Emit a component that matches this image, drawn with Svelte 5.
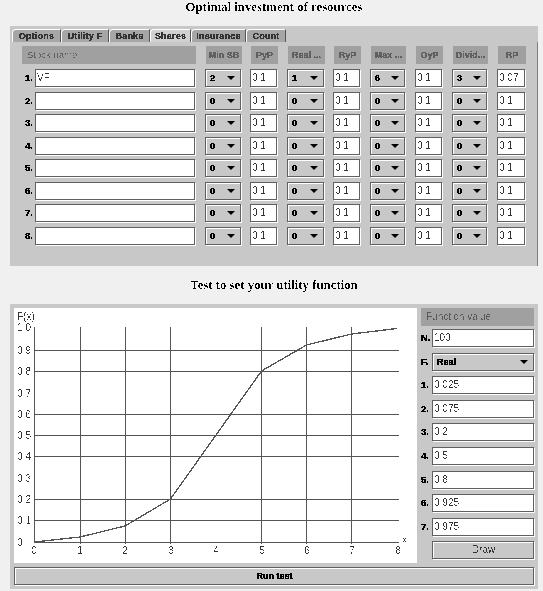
<script>
  const tabs = ['Options', 'Utility F', 'Banks', 'Shares', 'Insurance', 'Count'];
  const tabWidths = [49, 48, 41, 41, 55, 40];
  const cols = [
    { label: 'Min SB', w: 36, gap: 10, sel: true },
    { label: 'PyP', w: 27, gap: 9 },
    { label: 'Real ...', w: 37, gap: 10, sel: true },
    { label: 'RyP', w: 27, gap: 9 },
    { label: 'Max ...', w: 35, gap: 10, sel: true },
    { label: 'OyP', w: 27, gap: 10 },
    { label: 'Divid...', w: 35, gap: 10, sel: true },
    { label: 'RP', w: 28, gap: 10 }
  ];
  const rows = [
    { name: 'VF', vals: ['2', '0.1', '1', '0.1', '6', '0.1', '3', '0.07'] },
    ...[2, 3, 4, 5, 6, 7, 8].map(() => ({ name: '', vals: ['0', '0.1', '0', '0.1', '0', '0.1', '0', '0.1'] }))
  ];
  const fnValues = ['0.025', '0.075', '0.2', '0.5', '0.8', '0.925', '0.975'];

  const vLines = [66, 111, 156.5, 247.5, 292.5, 337.5];
  const hLines = [42.5, 63.5, 106.5, 127.5, 148.5, 191.5, 212.5];
  const yLabels = [
    ['1.0', 19], ['0.9', 42], ['0.8', 63], ['0.7', 85], ['0.6', 106], ['0.5', 127],
    ['0.4', 148], ['0.3', 170], ['0.2', 191], ['0.1', 212], ['0', 234]
  ];
  const xLabels = [20, 66, 111, 157, 202, 248, 293, 338, 384];
  const curve = '20.5,234 66,229 111,218 156.5,191 247.5,63 292.5,37 337.5,26 383,20.5';
</script>

<svg class="defs" width="0" height="0" aria-hidden="true">
  <filter id="alias" x="0" y="0" width="100%" height="100%" color-interpolation-filters="sRGB">
    <feComponentTransfer>
      <feFuncA type="discrete" tableValues="0 0 0 1 1" />
    </feComponentTransfer>
  </filter>
  <filter id="aliasb" x="0" y="0" width="100%" height="100%" color-interpolation-filters="sRGB">
    <feComponentTransfer>
      <feFuncA type="discrete" tableValues="0 1 1 1" />
    </feComponentTransfer>
  </filter>
</svg>

<div class="page">
  <h1 class="title"><span class="tx">Optimal investment of resources</span></h1>

  <section class="panel top">
    <div class="tabs">
      {#each tabs as t, i}
        <div class="tab" class:active={t === 'Shares'} style="width:{tabWidths[i]}px"><span class="tx">{t}</span></div>
      {/each}
    </div>
    <div class="pane">
      <div class="row head">
        <div class="hcell name-h"><span class="tx">Stock name</span></div>
        {#each cols as c}
          <div class="hcell" style="width:{c.w}px;margin-left:{c.gap}px"><span class="tx">{c.label}</span></div>
        {/each}
      </div>
      <div class="rows">
        {#each rows as r, i}
          <div class="row">
            <div class="num"><span class="tx">{i + 1}.</span></div>
            <div class="field name"><span class="tx">{r.name}</span></div>
            {#each cols as c, j}
              {#if c.sel}
                <div class="combo" style="width:{c.w}px;margin-left:{c.gap}px"><span class="tx">{r.vals[j]}</span><i class="arrow"></i></div>
              {:else}
                <div class="field" style="width:{c.w}px;margin-left:{c.gap}px"><span class="tx">{r.vals[j]}</span></div>
              {/if}
            {/each}
          </div>
        {/each}
      </div>
    </div>
  </section>

  <h2 class="title second"><span class="tx">Test to set your utility function</span></h2>

  <section class="panel bottom">
    <div class="work">
      <div class="chart">
        <svg width="403" height="255" viewBox="0 0 403 255">
          <g class="grid">
            {#each vLines as x}<line x1={x} x2={x} y1="19" y2="236" />{/each}
            {#each hLines as y}<line x1="20" x2="385" y1={y} y2={y} />{/each}
            <line x1="20.5" x2="20.5" y1="19" y2="235" />
            <line x1="20" x2="385" y1="234.5" y2="234.5" />
          </g>
          <polyline class="curve" points={curve} />
          <g class="ticks">
            <text x="3" y="12">F(x)</text>
            {#each yLabels as [l, y]}<text x="3" y={y + 4} textLength={l === '0' ? undefined : 14}>{l}</text>{/each}
            {#each xLabels as x, i}<text x={x} y="246" text-anchor="middle">{i}</text>{/each}
            <text x="388" y="235">x</text>
          </g>
        </svg>
      </div>
      <aside class="side">
        <div class="side-head"><span class="tx">Function value</span></div>
        <div class="side-rows">
          <div class="srow"><div class="num s"><span class="tx">N.</span></div><div class="field grow"><span class="tx">100</span></div></div>
          <div class="srow"><div class="num s"><span class="tx">F.</span></div><div class="combo grow"><span class="tx">Real</span><i class="arrow"></i></div></div>
          {#each fnValues as v, i}
            <div class="srow"><div class="num s"><span class="tx">{i + 1}.</span></div><div class="field grow"><span class="tx">{v}</span></div></div>
          {/each}
          <div class="srow"><div class="num s"></div><div class="btn grow"><span class="tx">Draw</span></div></div>
        </div>
      </aside>
    </div>
    <div class="btn run"><span class="tx">Run test</span></div>
  </section>
</div>

<style>
  :global(body) {
    margin: 0;
    background: #f0f0f0;
  }
  .defs {
    position: absolute;
  }
  .page {
    width: 528px;
    margin-left: 10px;
    font: 10px "Liberation Sans", Arial, sans-serif;
    color: #222;
  }
  .tx {
    display: inline-block;
    filter: url(#alias);
    white-space: nowrap;
  }
  .combo .tx, .num .tx, .run .tx, .tab .tx, .hcell .tx {
    filter: url(#aliasb);
  }
  .name-h .tx {
    filter: url(#alias);
  }
  .title {
    margin: 0;
    font: bold 12.8px/14px "Liberation Serif", "Times New Roman", serif;
    color: #000;
    text-align: center;
    height: 26px;
    box-sizing: border-box;
  }
  .second {
    height: 38px;
    padding-top: 12px;
  }
  .panel {
    background: #c8c8c8;
    box-sizing: border-box;
  }
  .top {
    height: 240px;
    padding-top: 3px;
    display: flex;
    flex-direction: column;
  }
  .bottom {
    height: 285px;
    padding: 4px 3px 0 4px;
  }
  .tabs {
    display: flex;
    height: 13px;
    padding-left: 2px;
  }
  .tab {
    box-sizing: border-box;
    background: #a6a6a6;
    border-top: 1px solid #fff;
    border-left: 1px solid #fff;
    border-right: 1px solid #555;
    border-top-left-radius: 4px;
    text-align: center;
    font-size: 9px;
    font-weight: bold;
    line-height: 12px;
    letter-spacing: 0.2px;
    color: #333;
  }
  .tab.active {
    background: #d0d0d0;
  }
  .pane {
    flex: 1;
    border-right: 1px solid #808080;
    padding: 4px 0 0 12px;
  }
  .row {
    display: flex;
    align-items: stretch;
    height: 19px;
  }
  .head {
    height: 18px;
    margin-bottom: 5px;
  }
  .rows {
    display: flex;
    flex-direction: column;
    gap: 3.57px;
  }
  .hcell {
    box-sizing: border-box;
    background: #a0a0a0;
    color: #606060;
    font-size: 9px;
    font-weight: bold;
    line-height: 18px;
    text-align: center;
    overflow: hidden;
  }
  .name-h {
    width: 174px;
    text-align: left;
    padding-left: 5px;
    font-size: 9.5px;
    font-weight: normal;
  }
  .num {
    width: 13px;
    font-size: 9.5px;
    font-weight: bold;
    line-height: 18px;
    text-align: left;
    padding-left: 3px;
    box-sizing: border-box;
    color: #000;
  }
  .num.s {
    width: 11px;
    padding-left: 0;
  }
  .field, .combo, .btn {
    box-sizing: border-box;
    border: 1px solid #606060;
    box-shadow: 1px 1px 0 #fff;
    line-height: 16px;
    padding-left: 1px;
    overflow: hidden;
    margin-bottom: 1px;
  }
  .field {
    background: #fff;
    color: #333;
  }
  .name {
    width: 160px;
    margin-left: 0;
  }
  .combo {
    background: #c8c8c8;
    color: #000;
    font-size: 9px;
    font-weight: bold;
    display: flex;
    align-items: center;
    justify-content: space-between;
    padding-right: 5px;
    padding-left: 4px;
    box-shadow: 1px 1px 0 #fff, inset 1px 1px 0 #fff;
  }
  .arrow {
    width: 0;
    height: 0;
    border-left: 4px solid transparent;
    border-right: 4px solid transparent;
    border-top: 4px solid #000;
  }
  .work {
    display: flex;
    height: 255px;
    gap: 4px;
  }
  .chart {
    width: 403px;
    height: 255px;
    background: #fff;
  }
  .chart svg {
    display: block;
  }
  .grid line {
    stroke: #555;
    stroke-width: 1;
    shape-rendering: crispEdges;
  }
  .curve {
    fill: none;
    stroke: #555;
    stroke-width: 1.3;
    shape-rendering: crispEdges;
  }
  .ticks {
    font: 10px "Liberation Sans", Arial, sans-serif;
    fill: #333;
    filter: url(#alias);
  }
  .side {
    width: 113px;
  }
  .side-head {
    height: 18px;
    background: #a0a0a0;
    color: #585858;
    line-height: 18px;
    padding-left: 5px;
    margin-bottom: 3px;
  }
  .side-rows {
    display: flex;
    flex-direction: column;
    gap: 4.6px;
  }
  .srow {
    display: flex;
    height: 19px;
  }
  .grow {
    flex: 1;
  }
  .btn {
    background: #c8c8c8;
    text-align: center;
    color: #333;
    box-shadow: 1px 1px 0 #fff, inset 1px 1px 0 #fff;
  }
  .run {
    margin-top: 4px;
    height: 18px;
    width: 520px;
    color: #000;
    font-size: 9px;
    font-weight: bold;
  }
</style>
